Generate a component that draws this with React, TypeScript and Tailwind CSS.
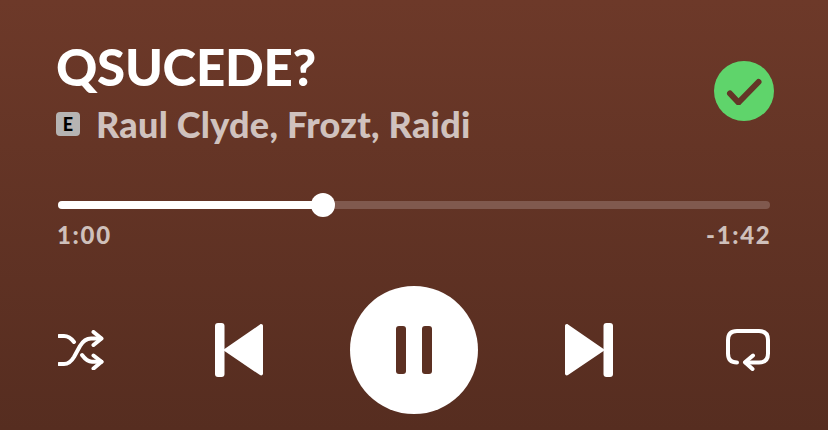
const Shuffle = () => (
  <svg width="46" height="40" viewBox="0 0 46 40" fill="none" stroke="white" strokeWidth="4" strokeLinecap="round" strokeLinejoin="round">
    <path d="M1 34h5c4 0 7-2 10-7l6-11c3-5 7-7.500 11-7.500h10" />
    <path d="M1 6h5c4 0 7 2 10 6" />
    <path d="M24 25c3 4 6 6.700 10 6.700h9.500" />
    <path d="M35.500 2l8 6.500-8 6.500" />
    <path d="M35.500 25.500l8 6.300-8 6.700" />
  </svg>
);

const Repeat = () => (
  <svg width="44" height="42" viewBox="0 0 44 42" fill="none" stroke="white" strokeWidth="4" strokeLinecap="round" strokeLinejoin="round">
    <path d="M11 33.500c-6 0-9-3-9-9V11c0-6 3-9 9-9h22c6 0 9 3 9 9v13.500c0 6-3 9-9 9H19.500" />
    <path d="M27 26.500l-8 6.800 7.500 6.700" />
  </svg>
);

const Prev = () => (
  <svg width="48" height="54" viewBox="0 0 48 54" fill="white">
    <rect x="0" y="0" width="9.500" height="54" rx="3" />
    <path d="M8 27 45 1.500c1.300-.9 3-.1 3 1.500v47.500c0 1.700-1.700 2.500-3 1.600z" />
  </svg>
);

const Next = () => (
  <svg width="48" height="54" viewBox="0 0 48 54" fill="white">
    <rect x="38.500" y="0" width="9.500" height="54" rx="3" />
    <path d="M40 27 3 1.500C1.700.6 0 1.400 0 3v47.500c0 1.700 1.700 2.500 3 1.600z" />
  </svg>
);

export default function App() {
  const progress = (265 / 712) * 100;

  return (
    <div className="w-[828px] h-[430px] overflow-hidden bg-gradient-to-b from-[#6d3929] to-[#562d20] px-[58px] font-['Lato',sans-serif]">
      <div className="flex items-center justify-between pt-[34px]">
        <div>
          <h1 className="ml-[-2px] text-[51px] leading-[66px] font-black tracking-[-0.3px] text-white">QSUCEDE?</h1>
          <div className="mt-[1px] ml-[-2px] flex items-center">
            <span className="flex h-[24px] w-[24px] items-center justify-center rounded-[4px] bg-[#b6b4b3] text-[18px] font-black text-black">
              E
            </span>
            <span className="ml-[16px] text-[36px] leading-[46px] font-black tracking-[0.25px] text-[#d0c2be]">
              Raul Clyde, Frozt, Raidi
            </span>
          </div>
        </div>
        <div className="mr-[-4px] flex h-[60px] w-[60px] items-center justify-center rounded-full bg-[#5fd46b]">
          <svg width="36" height="28" viewBox="0 0 36 28" fill="none" stroke="#643527" strokeWidth="6" strokeLinecap="round" strokeLinejoin="round">
            <path d="M4 16.500l8.500 9L32.500 5" />
          </svg>
        </div>
      </div>

      <div className="relative mt-[54px] h-[8px] rounded-full bg-[#80594e]">
        <div className="h-full rounded-full bg-white" style={{ width: `${progress}%` }} />
        <div className="absolute top-[-8px] left-[253px] h-[24px] w-[24px] rounded-full bg-white" />
      </div>

      <div className="mt-[11px] ml-[-1px] mr-[-1.500px] flex justify-between text-[24px] leading-[30px] font-black tracking-[1.7px] text-[#cfc0bb]">
        <span>1:00</span>
        <span>-1:42</span>
      </div>

      <div className="mt-[36px] flex items-center">
        <Shuffle />
        <div className="ml-[111px]">
          <Prev />
        </div>
        <div className="ml-[87px] flex h-[128px] w-[128px] items-center justify-center gap-[16px] rounded-full bg-white">
          <div className="h-[48px] w-[10px] rounded-[3px] bg-[#5c3022]" />
          <div className="h-[48px] w-[10px] rounded-[3px] bg-[#5c3022]" />
        </div>
        <div className="ml-[87px]">
          <Next />
        </div>
        <div className="ml-[113px]">
          <Repeat />
        </div>
      </div>
    </div>
  );
}
